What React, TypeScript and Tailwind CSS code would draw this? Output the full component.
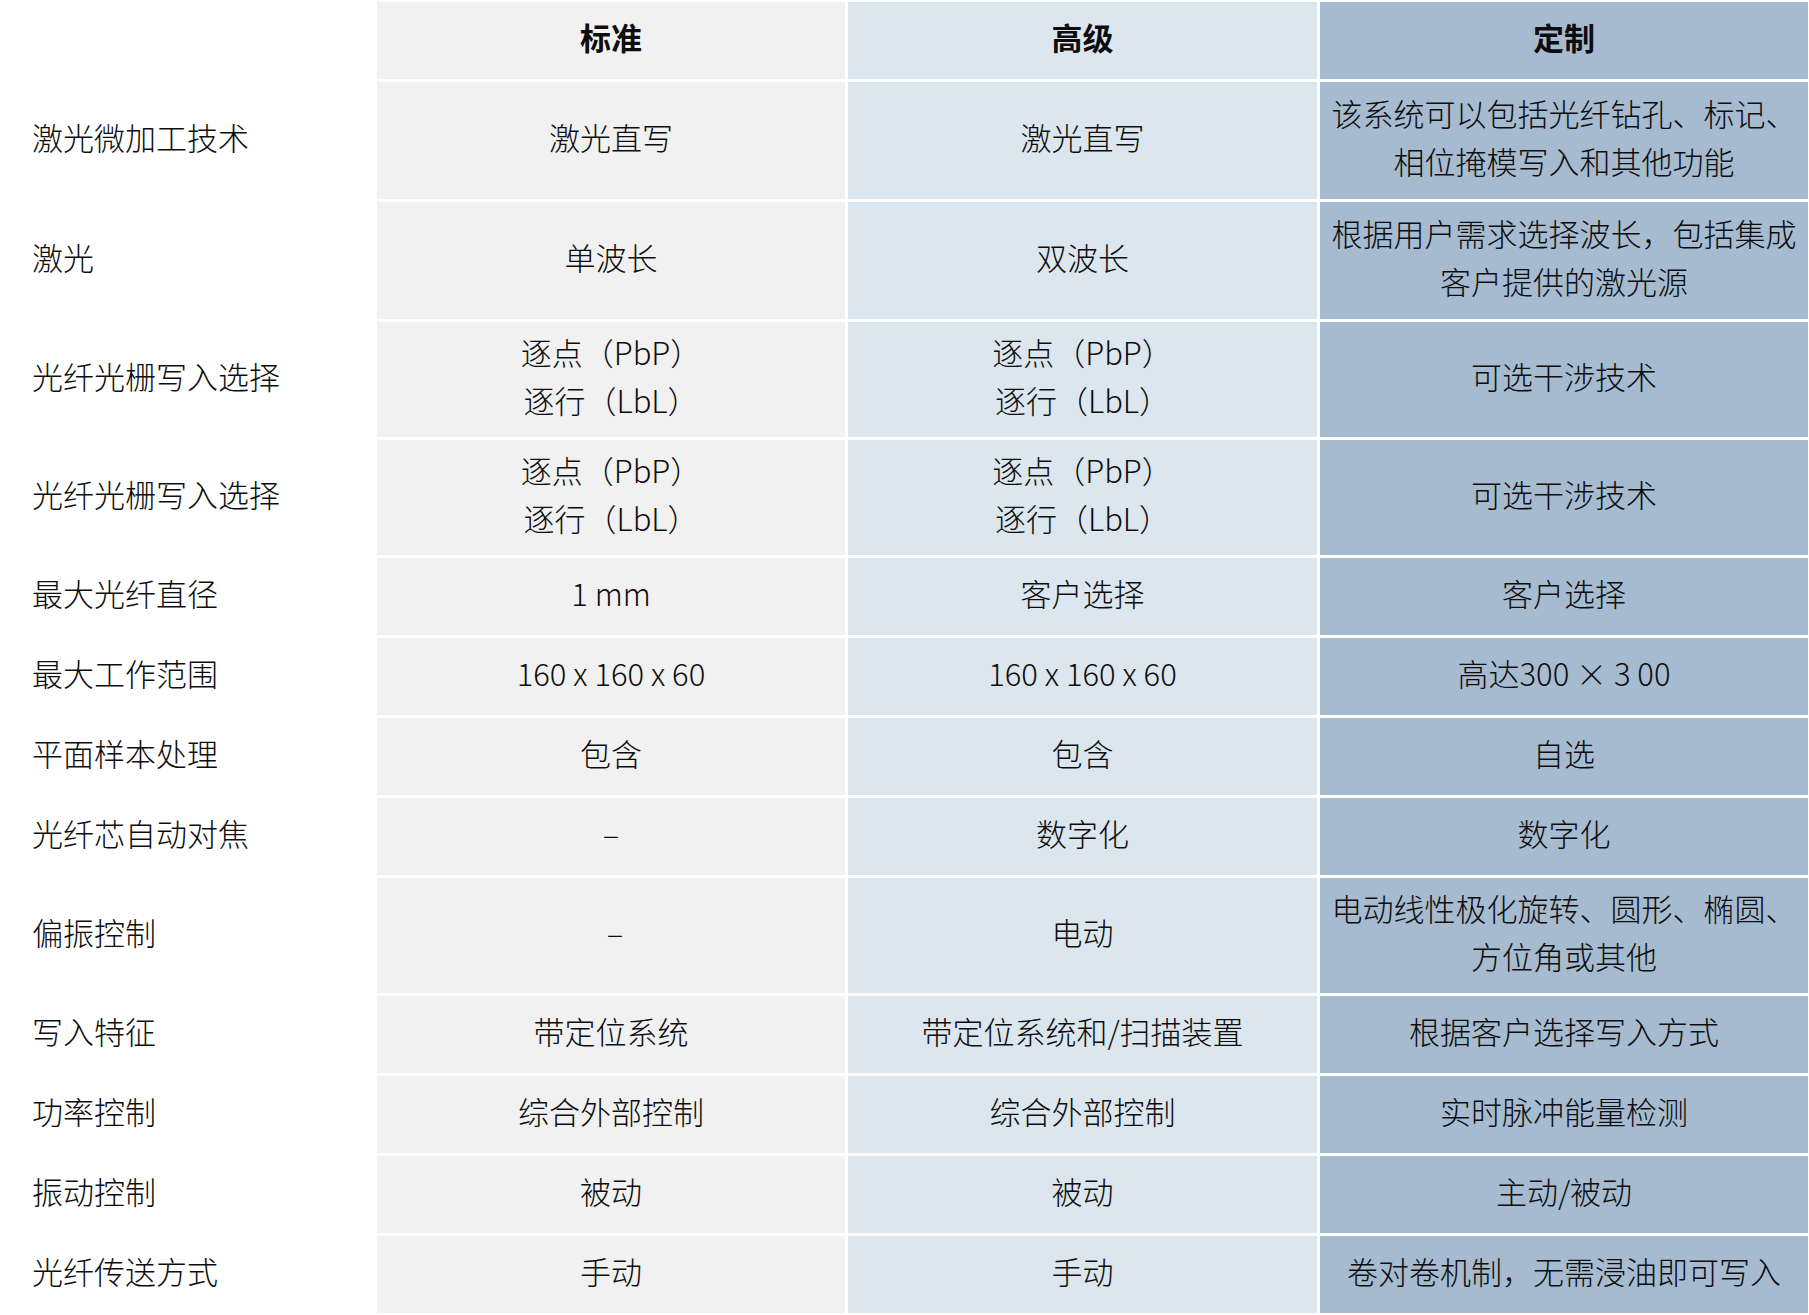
import React from "react";

type Row = {
  label: string;
  standard: React.ReactNode;
  advanced: React.ReactNode;
  custom: React.ReactNode;
  h: string;
};

const rows: Row[] = [
  {
    label: "激光微加工技术",
    standard: "激光直写",
    advanced: "激光直写",
    custom: (
      <>
        该系统可以包括光纤钻孔、标记、
        <br />
        相位掩模写入和其他功能
      </>
    ),
    h: "h-[117px]",
  },
  {
    label: "激光",
    standard: "单波长",
    advanced: "双波长",
    custom: (
      <>
        根据用户需求选择波长，包括集成
        <br />
        客户提供的激光源
      </>
    ),
    h: "h-[117px]",
  },
  {
    label: "光纤光栅写入选择",
    standard: (
      <>
        逐点（PbP）
        <br />
        逐行（LbL）
      </>
    ),
    advanced: (
      <>
        逐点（PbP）
        <br />
        逐行（LbL）
      </>
    ),
    custom: "可选干涉技术",
    h: "h-[115px]",
  },
  {
    label: "光纤光栅写入选择",
    standard: (
      <>
        逐点（PbP）
        <br />
        逐行（LbL）
      </>
    ),
    advanced: (
      <>
        逐点（PbP）
        <br />
        逐行（LbL）
      </>
    ),
    custom: "可选干涉技术",
    h: "h-[115px]",
  },
  { label: "最大光纤直径", standard: "1 mm", advanced: "客户选择", custom: "客户选择", h: "h-[77px]" },
  {
    label: "最大工作范围",
    standard: "160 x 160 x 60",
    advanced: "160 x 160 x 60",
    custom: "高达300 × 3 00",
    h: "h-[77px]",
  },
  { label: "平面样本处理", standard: "包含", advanced: "包含", custom: "自选", h: "h-[77px]" },
  { label: "光纤芯自动对焦", standard: "–", advanced: "数字化", custom: "数字化", h: "h-[77px]" },
  {
    label: "偏振控制",
    standard: <span className="pl-2">–</span>,
    advanced: "电动",
    custom: (
      <>
        电动线性极化旋转、圆形、椭圆、
        <br />
        方位角或其他
      </>
    ),
    h: "h-[115px]",
  },
  {
    label: "写入特征",
    standard: "带定位系统",
    advanced: "带定位系统和/扫描装置",
    custom: "根据客户选择写入方式",
    h: "h-[77px]",
  },
  {
    label: "功率控制",
    standard: "综合外部控制",
    advanced: "综合外部控制",
    custom: "实时脉冲能量检测",
    h: "h-[77px]",
  },
  { label: "振动控制", standard: "被动", advanced: "被动", custom: "主动/被动", h: "h-[77px]" },
  {
    label: "光纤传送方式",
    standard: "手动",
    advanced: "手动",
    custom: "卷对卷机制，无需浸油即可写入",
    h: "h-[77px]",
  },
];

// text sits a few px above the cell's centre in the original
const cell = "flex items-center justify-center text-center pb-[7px]";

export default function App() {
  return (
    <div
      className="min-h-screen bg-white pt-[2px] text-[31px] leading-[48px] font-light text-[#0d0d0d]"
      style={{ fontFamily: '"Noto Sans CJK SC", "Noto Sans", sans-serif' }}
    >
      <div className="grid grid-cols-[374px_468px_469px_488px] gap-[3px]">
        {/* header */}
        <div className="h-[77px]" />
        <div className={`${cell} h-[77px] bg-[#f1f1f1] font-bold`}>标准</div>
        <div className={`${cell} h-[77px] bg-[#dce6ee] font-bold`}>高级</div>
        <div className={`${cell} h-[77px] bg-[#a6bbd0] font-bold`}>定制</div>

        {rows.map((row, i) => (
          <React.Fragment key={i}>
            <div className={`flex items-center pl-8 pb-[7px] ${row.h}`}>{row.label}</div>
            <div className={`${cell} ${row.h} bg-[#f1f1f1]`}>
              <div>{row.standard}</div>
            </div>
            <div className={`${cell} ${row.h} bg-[#dce6ee]`}>
              <div>{row.advanced}</div>
            </div>
            <div className={`${cell} ${row.h} bg-[#a6bbd0]`}>
              <div>{row.custom}</div>
            </div>
          </React.Fragment>
        ))}
      </div>
    </div>
  );
}
